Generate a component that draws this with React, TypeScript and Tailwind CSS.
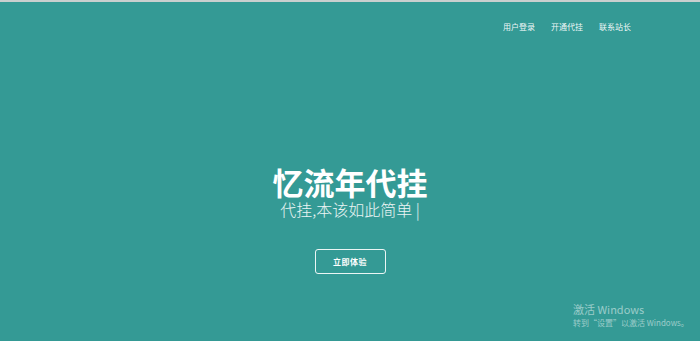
export default function App() {
  const font = { fontFamily: '"Noto Sans CJK SC", "Noto Sans", sans-serif' }
  return (
    <div
      className="relative h-[341px] w-[700px] overflow-hidden border-t-2 border-[#c9cfce] bg-[#349a95] text-white"
      style={font}
    >
      <nav className="flex justify-end gap-[16px] pr-[69px] pt-[19px] text-[8px] leading-[12px] text-white/95">
        <a className="w-[32px]">用户登录</a>
        <a className="w-[32px]">开通代挂</a>
        <a className="w-[32px]">联系站长</a>
      </nav>

      <div className="mt-[133px] flex flex-col items-center">
        <h1 className="text-[31px] font-bold leading-[31px]">忆流年代挂</h1>
        <p className="mt-[3px] text-[16px] font-light leading-[19px] text-white/90">
          代挂,本该如此简单 |
        </p>
        <button
          type="button"
          className="mt-[30px] flex h-[25px] w-[71px] items-center justify-center rounded-[3px] border-[1.5px] border-white/90 text-[8px] font-bold tracking-[0.5px]"
        >
          立即体验
        </button>
      </div>

      <div className="absolute left-[573px] top-[300px] text-white/50">
        <p className="text-[11px] leading-[15px]">激活 Windows</p>
        <p className="text-[8px] leading-[12px]">转到“设置”以激活 Windows。</p>
      </div>
    </div>
  )
}
